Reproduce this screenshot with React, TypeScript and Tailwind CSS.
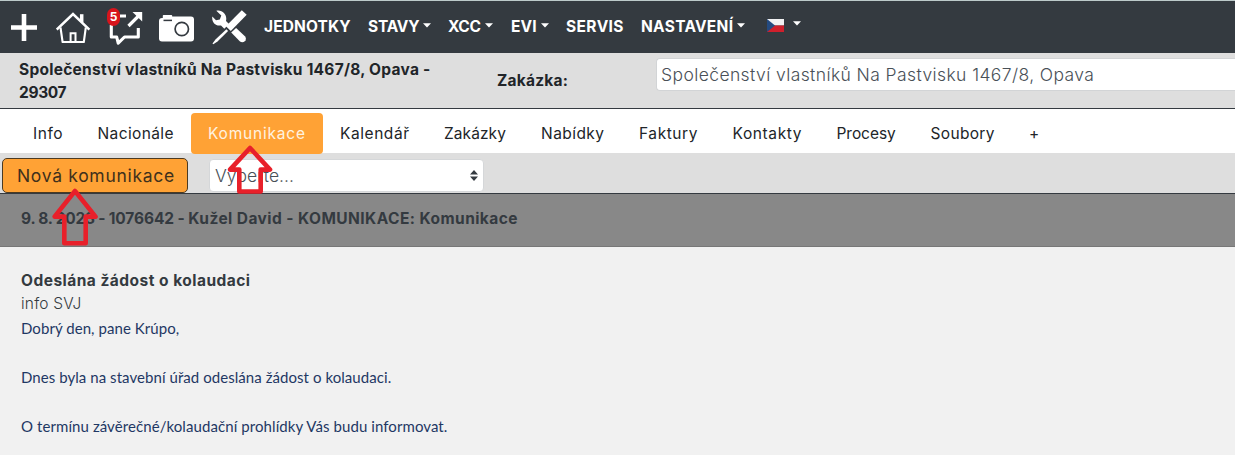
import type { ReactNode } from "react";

const navItems = [
  { label: "JEDNOTKY", box: "w-[104px]", tracking: "tracking-[0.1px]", caret: false },
  { label: "STAVY", box: "w-[80px]", tracking: "tracking-[-0.2px]", caret: true },
  { label: "XCC", box: "w-[63px]", tracking: "tracking-[-0.3px]", caret: true },
  { label: "EVI", box: "w-[55px]", tracking: "tracking-[0.1px]", caret: true },
  { label: "SERVIS", box: "w-[75px]", tracking: "tracking-[0.4px]", caret: false },
  { label: "NASTAVENÍ", box: "w-[126px]", tracking: "tracking-[0.28px]", caret: true },
];

const tabs = [
  { label: "Info", box: "w-[64.5px]", tracking: "tracking-[0.53px]" },
  { label: "Nacionále", box: "w-[110.5px]", tracking: "tracking-[0.38px]" },
  { label: "Komunikace", box: "w-[132px]", tracking: "tracking-[0.79px]", active: true },
  { label: "Kalendář", box: "w-[104px]", tracking: "tracking-[0.56px]" },
  { label: "Zakázky", box: "w-[97px]", tracking: "tracking-[0.08px]" },
  { label: "Nabídky", box: "w-[98px]", tracking: "tracking-[0.45px]" },
  { label: "Faktury", box: "w-[93.5px]", tracking: "tracking-[0.58px]" },
  { label: "Kontakty", box: "w-[104px]", tracking: "tracking-[0.61px]" },
  { label: "Procesy", box: "w-[94px]", tracking: "tracking-[-0.05px]" },
  { label: "Soubory", box: "w-[98.5px]", tracking: "tracking-[0.33px]" },
  { label: "+", box: "w-[44px]", tracking: "tracking-normal" },
];

function Caret() {
  return (
    <svg className="mt-[-3px] h-[5px] w-2 shrink-0" viewBox="0 0 8 5" fill="#fff">
      <path d="M0 .3h8L4 4.5z" />
    </svg>
  );
}

function PlusIcon() {
  return (
    <svg className="h-[27px] w-[27px]" viewBox="0 0 27 27" stroke="#fff" strokeWidth="4.6">
      <path d="M13 0v27M0 13.5h26" />
    </svg>
  );
}

function HomeIcon() {
  return (
    <svg className="h-8 w-[35px]" viewBox="0 0 35 32" fill="none" stroke="#fff">
      <path d="M.7 17.6 17 2l16.400 15.600" strokeWidth="2.5" />
      <path d="M25.700 2.200v8" strokeWidth="3.500" />
      <path d="M4.500 15.500 6.600 30h21.200l2-14.500" strokeWidth="2.100" strokeLinejoin="round" />
      <path d="M14.600 29.500v-8.300h4.900v8.300" strokeWidth="2" />
    </svg>
  );
}

function FeedbackIcon() {
  return (
    <svg className="h-[35px] w-[35px]" viewBox="0 0 35 35" fill="none" stroke="#fff">
      <path d="M10 6h8M3.300 15v12h5.400l1.500 6.200 6.300-6.200h13.800v-9" strokeWidth="3.100" strokeLinejoin="round" />
      <path d="M20.500 16 30.500 6" strokeWidth="3.200" />
      <path d="M24.500 2h9.700v9.500z" fill="#fff" stroke="none" />
    </svg>
  );
}

function CameraIcon() {
  return (
    <svg className="h-[27px] w-[35px]" viewBox="0 0 35 27">
      <path d="M3 3h.8V.8Q3.800 0 4.600 0h7.800q.8 0 .8.8V1.600H32q3 0 3 3V23.500q0 3-3 3H3q-3 0-3-3V6q0-3 3-3z" fill="#fff" />
      <circle cx="22.800" cy="14" r="6.700" fill="none" stroke="#343a40" strokeWidth="1.700" />
      <path d="M4.500 5.400h8.500" stroke="#343a40" strokeWidth="1.500" />
    </svg>
  );
}

function ToolsIcon() {
  return (
    <svg className="h-[35px] w-[35px]" viewBox="0 0 35 35" fill="#fff">
      <path d="M4.300.8 9.300 5.600 7.800 9.500 4 10.300.3 6.600C-.5 12 3.500 16.500 9 15.400l3.300 3.300 4.700-4.800-3-3C15.500 5 10.500-.7 4.300.8z" />
      <path d="m19.200 22.600 4.900-4.600 8.800 8.300c3 3.300-1.500 7.900-4.900 5.200z" />
      <path d="M29.800.3 34.700 4.800 18.800 20.900 13.900 16.300z" />
      <path d="m14.400 19.300 1.700 1.700L5.500 31.500 1.300 34.300.5 33.500l3-4z" />
    </svg>
  );
}

function CzechFlag() {
  return (
    <svg className="h-[13px] w-[17px]" viewBox="0 0 17 13">
      <path d="M0 0h17v6.500H0z" fill="#f1f1f3" />
      <path d="M0 6.500h17V13H0z" fill="#cf1f2c" />
      <path d="M0 0l8 6.500L0 13z" fill="#244a80" />
    </svg>
  );
}

function IconLink({ className, children }: { className: string; children: ReactNode }) {
  return <a className={`relative block shrink-0 ${className}`}>{children}</a>;
}

export default function App() {
  return (
    <div className="relative flex h-[455px] w-full flex-col overflow-hidden bg-[#f1f1f1] font-['Inter',sans-serif] text-[15.5px] whitespace-nowrap text-[#212529]">
      <nav className="flex h-[53px] shrink-0 items-start border-t border-[#bccaca] bg-[#343a40] text-white">
        <IconLink className="mt-[13px] ml-[11px] w-[45px]"><PlusIcon /></IconLink>
        <IconLink className="mt-[11px] w-[52px]"><HomeIcon /></IconLink>
        <IconLink className="mt-[9px] w-[51px]">
          <FeedbackIcon />
          <span className="absolute -top-[2px] -left-[1px] flex h-[18px] w-[13px] items-center justify-center rounded-full bg-[#d8141c] text-[12px] font-bold">5</span>
        </IconLink>
        <IconLink className="mt-[14px] w-[53px]"><CameraIcon /></IconLink>
        <IconLink className="mt-[9px] w-[52px]"><ToolsIcon /></IconLink>
        {navItems.map((item) => (
          <a key={item.label} className={`flex h-[51px] shrink-0 items-center gap-1 font-bold ${item.box} ${item.tracking}`}>
            {item.label}
            {item.caret && <Caret />}
          </a>
        ))}
        <a className="flex h-[48px] items-center gap-[9px]">
          <CzechFlag />
          <Caret />
        </a>
      </nav>

      <header className="flex h-14 shrink-0 border-b border-[#343a40] bg-[#dedede] font-bold">
        <h1 className="w-[497px] shrink-0 pt-[5px] pl-[19px] leading-[23px] tracking-[0.26px]">
          Společenství vlastníků Na Pastvisku 1467/8, Opava -
          <br />
          <span className="tracking-[-0.35px]">29307</span>
        </h1>
        <label className="w-[159px] shrink-0 pt-4 leading-[23px] tracking-[0.24px]">Zakázka:</label>
        <div className="mt-[5px] h-[33px] flex-1 rounded-l-[4px] border border-r-0 border-[#d2d4d6] bg-white pl-[4px] text-[17.5px] leading-[32px] font-light tracking-[0.4px] text-[#495057]">
          Společenství vlastníků Na Pastvisku 1467/8, Opava
        </div>
      </header>

      <div className="flex h-11 shrink-0 bg-white pt-1 pl-4">
        {tabs.map((tab) => (
          <a
            key={tab.label}
            className={`block shrink-0 rounded-[4px] pl-[17px] leading-[41px] ${tab.active ? "z-10 h-[41px] bg-[#ffa235] text-[#fff3e0]" : "h-10"} ${tab.box} ${tab.tracking}`}
          >
            {tab.label}
          </a>
        ))}
      </div>

      <div className="flex h-[41px] shrink-0 border-b border-[#343a40] bg-[#dedede] text-[17.5px]">
        <button className="mt-[5px] ml-[2px] h-[35px] w-[186px] shrink-0 rounded-[5px] border border-[#4b3a22] bg-[#ffa235] pl-[14px] text-left leading-[34px] tracking-[0.69px] text-[#40301c]">
          Nová komunikace
        </button>
        <div className="mt-[6px] ml-[21px] flex h-[33px] w-[275px] items-center justify-between rounded-[4px] border border-[#d5d7d9] bg-white pr-[5px] pl-[5px] text-[#495057]">
          <span className="pt-[2px] font-light">Vyberte...</span>
          <svg className="h-[11px] w-2" viewBox="0 0 8 11" fill="#343a40">
            <path d="M0 4.500 4 0l4 4.500zM0 6.500h8L4 11z" />
          </svg>
        </div>
      </div>

      <div className="h-[53px] shrink-0 border-b border-[#777] bg-[#888] pl-[21px] leading-[50px] font-bold text-[#343a40]">
        <span className="tracking-[-0.23px]">9. 8. 2023 - </span>
        <span className="tracking-[-0.1px]">1076642 - </span>
        <span className="tracking-[0.43px]">Kužel David - </span>
        <span className="tracking-[0.44px]">KOMUNIKACE: Komunikace</span>
      </div>

      <main className="pt-[22px] pl-[21px] leading-[23px] text-[#343a40]">
        <h2 className="font-bold tracking-[0.48px]">Odeslána žádost o kolaudaci</h2>
        <p className="font-light tracking-[0.2px]">info SVJ</p>
        <div className="pt-px font-['Lato',sans-serif] text-[15px] leading-[24.5px] tracking-[0.06px] text-[#1f3864]">
          <p>Dobrý den, pane Krúpo,</p>
          <p className="pt-[24.5px]">Dnes byla na stavební úřad odeslána žádost o kolaudaci.</p>
          <p className="pt-[24.5px] tracking-[0.08px]">O termínu závěrečné/kolaudační prohlídky Vás budu informovat.</p>
        </div>
      </main>

      <svg className="absolute top-[145px] left-[227px] z-20 h-[49px] w-[46px]" viewBox="0 0 46 49" fill="none" stroke="#e8202a" strokeWidth="4.6" strokeLinejoin="round">
        <path d="M23 3 43 24.600H33.700V46.500H12.300V24.600H3z" />
      </svg>
      <svg className="absolute top-[188px] left-[52px] z-20 h-[58px] w-[46px]" viewBox="0 0 46 58" fill="none" stroke="#e8202a" strokeWidth="4.6" strokeLinejoin="round">
        <path d="M23 3 43.500 28.600H33.700V55.300H12.300V28.600H2.600z" />
      </svg>
    </div>
  );
}
